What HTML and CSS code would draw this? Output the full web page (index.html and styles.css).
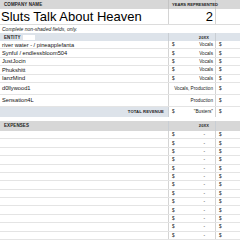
FILE: index.html
```html
<!DOCTYPE html>
<html>
<head>
<meta charset="utf-8">
<link rel="stylesheet" href="styles.css">
</head>
<body>
<div class="sheet">
  <div class="row hdr">
    <div class="cell c1 cap">COMPANY NAME</div>
    <div class="cell c2 cap yrs">YEARS REPRESENTED</div>
    <div class="cell c3"></div>
  </div>
  <div class="row title">
    <div class="cell c1 name">Sluts Talk About Heaven</div>
    <div class="cell c2 num">2</div>
    <div class="cell c3"></div>
  </div>
  <div class="note">Complete non-shaded fields, only.</div>
  <div class="row shead">
    <div class="cell c1 cap">ENTITY <span class="inbox"></span></div>
    <div class="cell c2 cap yr">20XX</div>
    <div class="cell c3"></div>
  </div>
  <div class="row line">
    <div class="cell c1 ent">river water - / pineapplefanta</div>
    <div class="cell c2 money"><span>$</span><span>Vocals</span></div>
    <div class="cell c3 money"><span>$</span></div>
  </div>
  <div class="row line">
    <div class="cell c1 ent">Synful / endlessbloom504</div>
    <div class="cell c2 money"><span>$</span><span>Vocals</span></div>
    <div class="cell c3 money"><span>$</span></div>
  </div>
  <div class="row line">
    <div class="cell c1 ent">JustJocin</div>
    <div class="cell c2 money"><span>$</span><span>Vocals</span></div>
    <div class="cell c3 money"><span>$</span></div>
  </div>
  <div class="row line">
    <div class="cell c1 ent">Phukshitt</div>
    <div class="cell c2 money"><span>$</span><span>Vocals</span></div>
    <div class="cell c3 money"><span>$</span></div>
  </div>
  <div class="row line">
    <div class="cell c1 ent">IanzMind</div>
    <div class="cell c2 money"><span>$</span><span>Vocals</span></div>
    <div class="cell c3 money"><span>$</span></div>
  </div>
  <div class="row line tall">
    <div class="cell c1 ent">d0llywood1</div>
    <div class="cell c2 money right"><span>Vocals, Production</span></div>
    <div class="cell c3 money"><span>$</span></div>
  </div>
  <div class="row line tall">
    <div class="cell c1 ent">Sensation4L</div>
    <div class="cell c2 money right"><span>Production</span></div>
    <div class="cell c3 money"><span>$</span></div>
  </div>
  <div class="row total">
    <div class="cell c1 cap tr">TOTAL REVENUE</div>
    <div class="cell c2 money"><span>$</span><span>"Busters"</span></div>
    <div class="cell c3 money"><span>$</span></div>
  </div>
  <div class="gap"></div>
  <div class="row ghead">
    <div class="cell c1 cap">EXPENSES</div>
    <div class="cell c2 cap yr">20XX</div>
    <div class="cell c3"></div>
  </div>
  <div class="row line"><div class="cell c1"></div><div class="cell c2 money"><span>$</span><span class="dash">-</span></div><div class="cell c3 money"><span>$</span></div></div>
  <div class="row line"><div class="cell c1"></div><div class="cell c2 money"><span>$</span><span class="dash">-</span></div><div class="cell c3 money"><span>$</span></div></div>
  <div class="row line"><div class="cell c1"></div><div class="cell c2 money"><span>$</span><span class="dash">-</span></div><div class="cell c3 money"><span>$</span></div></div>
  <div class="row line"><div class="cell c1"></div><div class="cell c2 money"><span>$</span><span class="dash">-</span></div><div class="cell c3 money"><span>$</span></div></div>
  <div class="row line"><div class="cell c1"></div><div class="cell c2 money"><span>$</span><span class="dash">-</span></div><div class="cell c3 money"><span>$</span></div></div>
  <div class="row line"><div class="cell c1"></div><div class="cell c2 money"><span>$</span><span class="dash">-</span></div><div class="cell c3 money"><span>$</span></div></div>
  <div class="row line"><div class="cell c1"></div><div class="cell c2 money"><span>$</span><span class="dash">-</span></div><div class="cell c3 money"><span>$</span></div></div>
  <div class="row line"><div class="cell c1"></div><div class="cell c2 money"><span>$</span><span class="dash">-</span></div><div class="cell c3 money"><span>$</span></div></div>
  <div class="row line"><div class="cell c1"></div><div class="cell c2 money"><span>$</span><span class="dash">-</span></div><div class="cell c3 money"><span>$</span></div></div>
  <div class="row line"><div class="cell c1"></div><div class="cell c2 money"><span>$</span><span class="dash">-</span></div><div class="cell c3 money"><span>$</span></div></div>
  <div class="row line"><div class="cell c1"></div><div class="cell c2 money"><span>$</span><span class="dash">-</span></div><div class="cell c3 money"><span>$</span></div></div>
  <div class="row line"><div class="cell c1"></div><div class="cell c2 money"><span>$</span><span class="dash">-</span></div><div class="cell c3 money"><span>$</span></div></div>
  <div class="row line"><div class="cell c1"></div><div class="cell c2 money"><span>$</span><span class="dash">-</span></div><div class="cell c3 money"><span>$</span></div></div>
</div>
</body>
</html>
```

FILE: styles.css
```css
html, body {
  margin: 0;
  padding: 0;
  background: #ffffff;
}
body {
  width: 240px;
  height: 240px;
  overflow: hidden;
  font-family: "Liberation Sans", Arial, sans-serif;
  color: #111;
}
.sheet {
  display: flex;
  flex-direction: column;
}
.row {
  display: grid;
  grid-template-columns: 169px 47px 24px;
  box-sizing: border-box;
}
.cell {
  box-sizing: border-box;
  display: flex;
  align-items: center;
  white-space: nowrap;
  overflow: hidden;
}
.c1, .c2 {
  border-right: 1px solid #d4d4d4;
}
.cap {
  font-weight: bold;
  font-size: 4.5px;
  letter-spacing: 0.1px;
  color: #222;
  padding-left: 4px;
}
.hdr {
  height: 9px;
  background: #d7d7d7;
}
.hdr .c1, .hdr .c2 {
  border-right-color: #c4c4c4;
}
.yrs {
  padding-left: 3px;
  font-size: 4.1px;
  letter-spacing: 0;
  overflow: visible;
}
.title {
  height: 16px;
  border-bottom: 1px solid #dcdcdc;
}
.name {
  font-size: 13px;
  padding-left: 1px;
  color: #000;
}
.num {
  font-size: 13px;
  justify-content: flex-end;
  padding-right: 2px;
  color: #000;
}
.note {
  height: 8px;
  font-size: 5px;
  font-style: italic;
  line-height: 8px;
  padding-left: 2px;
  color: #222;
}
.shead {
  height: 8px;
  background: #dde3ea;
}
.shead .c1, .shead .c2, .ghead .c1, .ghead .c2 {
  border-right-color: #c9ced4;
}
.inbox {
  display: inline-block;
  width: 12px;
  height: 5px;
  background: #fff;
  margin-left: 2px;
}
.yr {
  justify-content: flex-end;
  padding-right: 6px;
  font-size: 4px;
}
.line {
  height: 8.4px;
  border-bottom: 1px solid #e4e4e4;
}
.tall {
  height: 12px;
}
.ent {
  font-size: 5.7px;
  padding-left: 2px;
  color: #111;
}
.money {
  justify-content: space-between;
  font-size: 4.7px;
  padding: 0 2px 0 3px;
  color: #222;
}
.right {
  justify-content: flex-end;
}
.dash {
  padding-right: 8px;
}
.total {
  height: 10px;
  background: #dde3ea;
}
.total .c1 {
  border-right-color: #c9ced4;
}
.total .c2, .total .c3 {
  background: #ffffff;
}
.tr {
  justify-content: flex-end;
  padding-right: 4px;
  font-size: 4.2px;
}
.gap {
  height: 4px;
  background: #ffffff;
}
.ghead {
  height: 10px;
  background: #d7d7d7;
}
```
